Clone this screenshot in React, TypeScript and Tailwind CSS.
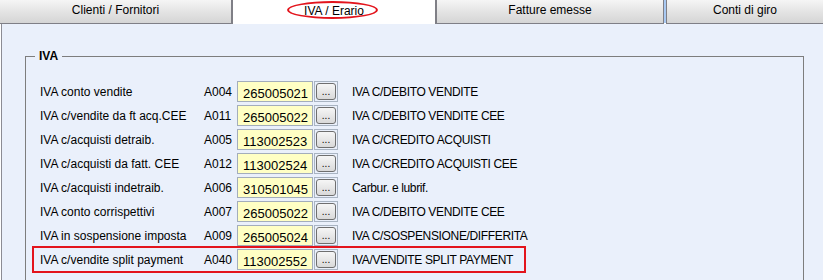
import React from 'react';

// --- Account rows for the IVA group ---
const rows = [
  { label: 'IVA conto vendite', code: 'A004', account: '265005021', desc: 'IVA C/DEBITO VENDITE' },
  { label: 'IVA c/vendite da ft acq.CEE', code: 'A011', account: '265005022', desc: 'IVA C/DEBITO VENDITE CEE' },
  { label: 'IVA c/acquisti detraib.', code: 'A005', account: '113002523', desc: 'IVA C/CREDITO ACQUISTI' },
  { label: 'IVA c/acquisti da fatt. CEE', code: 'A012', account: '113002524', desc: 'IVA C/CREDITO ACQUISTI CEE' },
  { label: 'IVA c/acquisti indetraib.', code: 'A006', account: '310501045', desc: 'Carbur. e lubrif.' },
  { label: 'IVA conto corrispettivi', code: 'A007', account: '265005022', desc: 'IVA C/DEBITO VENDITE CEE' },
  { label: 'IVA in sospensione imposta', code: 'A009', account: '265005024', desc: 'IVA C/SOSPENSIONE/DIFFERITA' },
];

const splitRow = { label: 'IVA c/vendite split payment', code: 'A040', account: '113002552', desc: 'IVA/VENDITE SPLIT PAYMENT' };

type Row = typeof splitRow;

const AccountRow: React.FC<{ row: Row }> = ({ row }) => (
  <div className="flex items-center h-[21px]">
    <span className="w-[164px] text-[12px]">{row.label}</span>
    <span className="w-[33px] text-[12px]">{row.code}</span>
    <div className="w-[76px] h-[21px] border border-[#a3adbb] bg-[#ffffc4] flex items-center pl-[5px] text-[13px] leading-none pt-[3px]">
      {row.account}
    </div>
    <button className="ml-[1px] w-[24px] h-[21px] border border-[#a9b4c2] p-px">
      <div className="w-full h-full rounded-[3px] border border-[#6f6f6f] bg-gradient-to-b from-[#f6f6f6] to-[#d9d9d9] flex items-end justify-center text-[10px] leading-[12px] pb-[1px]">
        ...
      </div>
    </button>
    <span className="ml-[14px] text-[12px] tracking-[-0.35px] whitespace-nowrap">{row.desc}</span>
  </div>
);

const Tab: React.FC<{ label: string; className: string }> = ({ label, className }) => (
  <div className={`h-[24px] flex items-center justify-center text-[12px] pb-[3px] ${className}`}>{label}</div>
);

const App: React.FC = () => {
  return (
    <div className="relative w-[823px] h-[280px] overflow-hidden bg-white text-black" style={{ fontFamily: '"Liberation Sans", Arial, sans-serif' }}>
      {/* --- Tab bar --- */}
      <div className="flex h-[24px]">
        <Tab
          label="Clienti / Fornitori"
          className="w-[233px] border-r-2 border-b border-[#7f7f86] bg-gradient-to-b from-[#f5f5f5] via-[#e4e4e4] to-[#d5d5d5]"
        />
        <Tab label="IVA / Erario" className="w-[202px] bg-white" />
        <Tab
          label="Fatture emesse"
          className="w-[229px] border-l-2 border-r border-b border-[#7f7f86] bg-gradient-to-b from-[#f5f5f5] via-[#e4e4e4] to-[#d5d5d5]"
        />
        <div className="w-[2px] h-[23px] bg-[#a9c9f2]" />
        <Tab
          label="Conti di giro"
          className="flex-1 border-l border-b border-[#7f7f86] bg-gradient-to-b from-[#f5f5f5] via-[#e4e4e4] to-[#d5d5d5]"
        />
      </div>

      {/* red highlight round the selected tab */}
      <div className="absolute left-[287px] top-[1px] w-[91px] h-[18px] rounded-[50%] border-2 border-[#e3141c]" />

      {/* --- Panel --- */}
      <div className="ml-px h-[256px] border-l border-[#8c8c94] bg-[#eaf0fb] pl-[23px] pr-[19px] pt-[25px]">
        <fieldset className="border border-[#7d7d7d] h-[260px]">
          <legend className="ml-[9px] px-[4px] text-[12px] font-bold leading-[14px]">IVA</legend>
          <div className="pl-[14px] mt-[18px] flex flex-col gap-[3px]">
            {rows.map((r) => (
              <AccountRow key={r.code} row={r} />
            ))}
            <div className="-mx-[8px] -my-[3px] w-[494px] border-2 border-[#e3141c] px-[6px] py-px">
              <AccountRow row={splitRow} />
            </div>
          </div>
        </fieldset>
      </div>
    </div>
  );
};

export default App;
